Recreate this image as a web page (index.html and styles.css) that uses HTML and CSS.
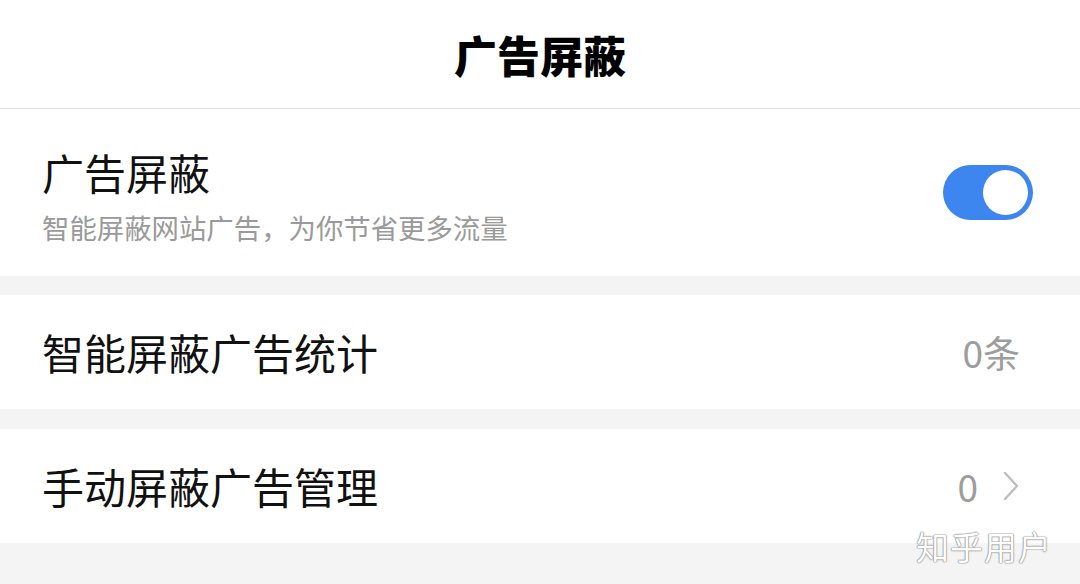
FILE: index.html
```html
<!DOCTYPE html>
<html lang="zh-CN">
<head>
<meta charset="utf-8">
<link rel="stylesheet" href="styles.css">
</head>
<body>
<div class="page">
  <header class="topbar"><h1 class="topbar-title">广告屏蔽</h1></header>
  <section class="card card-switch">
    <div class="switch-text">
      <div class="row-title">广告屏蔽</div>
      <div class="row-sub">智能屏蔽网站广告，为你节省更多流量</div>
    </div>
    <div class="toggle"><span class="knob"></span></div>
  </section>
  <section class="card card-row">
    <div class="row-title">智能屏蔽广告统计</div>
    <div class="row-value">0条</div>
  </section>
  <section class="card card-row">
    <div class="row-title">手动屏蔽广告管理</div>
    <div class="row-value with-arrow">0
      <svg class="chevron" width="18" height="30" viewBox="0 0 18 30"><path d="M3 2 L15 15 L3 28" fill="none" stroke="#bdbdbd" stroke-width="2.4" stroke-linecap="round" stroke-linejoin="round"/></svg>
    </div>
  </section>
  <div class="watermark">知乎用户</div>
</div>
</body>
</html>
```
FILE: styles.css
```css
html, body {
  margin: 0;
  padding: 0;
}
body {
  width: 1080px;
  height: 584px;
  overflow: hidden;
  background: #f4f4f4;
  font-family: "Noto Sans CJK SC", "Noto Sans", sans-serif;
  color: #111;
}
.page {
  position: relative;
  height: 584px;
}
.topbar {
  height: 108px;
  background: #fff;
  border-bottom: 1px solid #e4e4e4;
  display: flex;
  align-items: center;
  justify-content: center;
}
.topbar-title {
  margin: 0;
  font-size: 43px;
  font-weight: 900;
  line-height: 50px;
  color: #000;
}
.card {
  background: #fff;
  display: flex;
  align-items: center;
  justify-content: space-between;
  padding: 0 47px 0 42px;
}
.card-switch {
  height: 167px;
  box-sizing: border-box;
  padding-top: 38px;
  padding-bottom: 31px;
  align-items: flex-start;
}
.switch-text {
  display: flex;
  flex-direction: column;
}
.row-title {
  font-size: 42px;
  line-height: 50px;
  color: #111;
}
.row-sub {
  margin-top: 13px;
  font-size: 27.4px;
  line-height: 34px;
  color: #9a9a9a;
}
.toggle {
  margin-top: 18px;
  width: 90px;
  height: 55px;
  border-radius: 28px;
  background: #3d86f0;
  position: relative;
}
.knob {
  position: absolute;
  right: 5px;
  top: 5px;
  width: 45px;
  height: 45px;
  border-radius: 50%;
  background: #fff;
}
.card-row {
  margin-top: 19px;
  height: 114px;
  padding-right: 60px;
}
.card-row + .card-row {
  margin-top: 20px;
}
.row-value {
  font-size: 37px;
  line-height: 44px;
  color: #9d9d9d;
  display: flex;
  align-items: center;
}
.chevron {
  margin-left: 24px;
}
.watermark {
  position: absolute;
  right: 28px;
  bottom: 18px;
  font-size: 33px;
  line-height: 40px;
  color: #fff;
  letter-spacing: 1px;
  text-shadow: 0 0 1px #777, 0 0 1px #777, 0 0 2px #aaa;
}
```
